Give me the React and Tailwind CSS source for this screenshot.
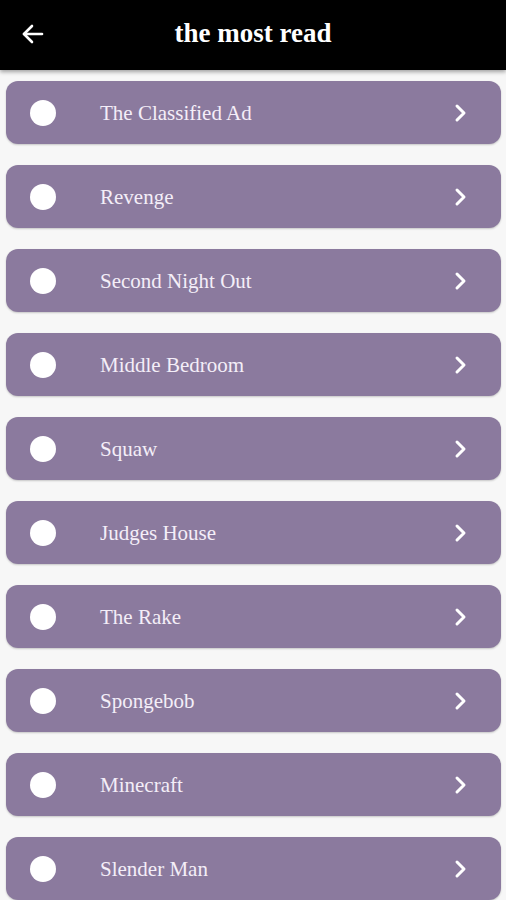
import React from "react";

const items = [
  "The Classified Ad",
  "Revenge",
  "Second Night Out",
  "Middle Bedroom",
  "Squaw",
  "Judges House",
  "The Rake",
  "Spongebob",
  "Minecraft",
  "Slender Man",
];

export default function App() {
  return (
    <div className="w-[506px] h-[900px] overflow-hidden bg-[#f7f7f7]" style={{ fontFamily: '"Liberation Serif", "DejaVu Serif", serif' }}>
      <div className="h-[70px] bg-black flex items-center relative shadow-[0_2px_4px_rgba(0,0,0,0.35)]">
        <svg className="absolute left-[21px] top-[23px]" width="24" height="22" viewBox="0 0 24 22" fill="none" stroke="white" strokeWidth="2.6" strokeLinecap="round" strokeLinejoin="round">
          <path d="M21 11H3" />
          <path d="M11 3L3 11l8 8" />
        </svg>
        <div className="w-full text-center text-white font-bold text-[27px] leading-none pb-[3px]">the most read</div>
      </div>
      <div className="flex flex-col gap-[21px] pl-[6px] pr-[5px] pt-[11px]">
        {items.map((t) => (
          <div key={t} className="h-[63px] shrink-0 rounded-[12px] bg-[#8b7a9e] flex items-center shadow-[0_1px_2px_rgba(0,0,0,0.2)]">
            <div className="w-[26px] h-[26px] rounded-full bg-white ml-[24px]" />
            <div className="ml-[44px] text-[#f4eef8] text-[21px] leading-none flex-1 pt-[2px]">{t}</div>
            <svg className="mr-[34px]" width="14" height="20" viewBox="0 0 14 20" fill="none" stroke="white" strokeWidth="3" strokeLinecap="round" strokeLinejoin="round">
              <path d="M4 3l7 7-7 7" />
            </svg>
          </div>
        ))}
      </div>
    </div>
  );
}
